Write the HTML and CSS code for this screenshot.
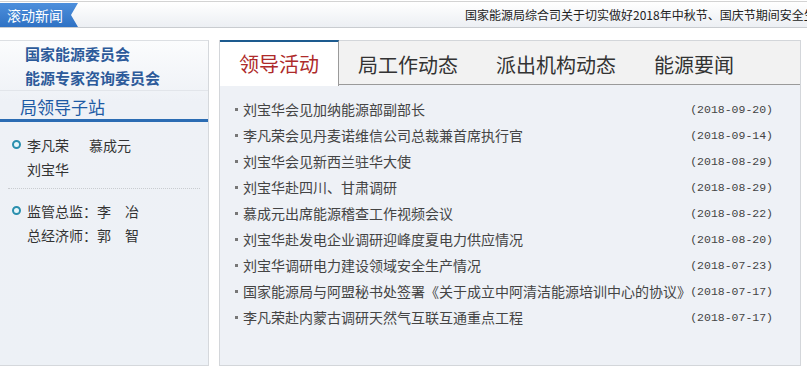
FILE: index.html
```html
<!DOCTYPE html>
<html lang="zh-CN">
<head>
  <meta charset="UTF-8" />
  <title>国家能源局 - 局领导子站</title>
  <link rel="stylesheet" href="styles.css">
</head>
<body>
  <!-- 滚动新闻 -->
  <div class="ticker">
    <div class="ticker-label">滚动新闻</div>
    <div class="ticker-text">国家能源局综合司关于切实做好2018年中秋节、国庆节期间安全生产工作的通知</div>
  </div>

  <div class="main">
    <!-- 左侧 -->
    <div class="side">
      <div class="side-links">
        <a href="#">国家能源委员会</a>
        <a href="#">能源专家咨询委员会</a>
      </div>
      <h2 class="side-title">局领导子站</h2>

      <div class="leader-group">
        <span class="dot"></span>
        <div class="names">
          <div><span class="name">李凡荣</span><span>慕成元</span></div>
          <div>刘宝华</div>
        </div>
      </div>
      <div class="leader-group">
        <span class="dot"></span>
        <div class="names">
          <div>监管总监：李　冶</div>
          <div>总经济师：郭　智</div>
        </div>
      </div>
    </div>

    <!-- 右侧 -->
    <div class="panel">
      <div class="tabs">
        <a class="tab active">领导活动</a>
        <a class="tab">局工作动态</a>
        <a class="tab">派出机构动态</a>
        <a class="tab">能源要闻</a>
      </div>
      <ul class="news">
        <li><span class="title">刘宝华会见加纳能源部副部长</span><span class="date">(2018-09-20)</span></li>
        <li><span class="title">李凡荣会见丹麦诺维信公司总裁兼首席执行官</span><span class="date">(2018-09-14)</span></li>
        <li><span class="title">刘宝华会见新西兰驻华大使</span><span class="date">(2018-08-29)</span></li>
        <li><span class="title">刘宝华赴四川、甘肃调研</span><span class="date">(2018-08-29)</span></li>
        <li><span class="title">慕成元出席能源稽查工作视频会议</span><span class="date">(2018-08-22)</span></li>
        <li><span class="title">刘宝华赴发电企业调研迎峰度夏电力供应情况</span><span class="date">(2018-08-20)</span></li>
        <li><span class="title">刘宝华调研电力建设领域安全生产情况</span><span class="date">(2018-07-23)</span></li>
        <li><span class="title">国家能源局与阿盟秘书处签署《关于成立中阿清洁能源培训中心的协议》</span><span class="date">(2018-07-17)</span></li>
        <li><span class="title">李凡荣赴内蒙古调研天然气互联互通重点工程</span><span class="date">(2018-07-17)</span></li>
      </ul>
    </div>
  </div>
</body>
</html>
```

FILE: styles.css
```css
html, body {
  margin: 0;
  padding: 0;
  background: #fff;
  font-family: "Noto Sans CJK SC", "Liberation Sans", sans-serif;
  color: #333;
}

body {
  width: 807px;
  padding-top: 1px;
  overflow: hidden;
}

a {
  text-decoration: none;
}

/* 滚动新闻 */
.ticker {
  display: flex;
  align-items: stretch;
  height: 25px;
  border-top: 1px solid #d3d3d3;
  border-bottom: 1px solid #c9ccd0;
  background: linear-gradient(#ffffff, #eceff3);
  overflow: hidden;
}

.ticker-label {
  flex-shrink: 0;
  width: 78px;
  margin-top: 1px;
  padding-left: 7px;
  box-sizing: border-box;
  color: #fff;
  font-size: 14px;
  line-height: 24px;
  white-space: nowrap;
  background: linear-gradient(#4d8fdc, #2f72c4);
  clip-path: polygon(0 0, 100% 0, 71px 50%, 100% 100%, 0 100%);
}

.ticker-text {
  flex-shrink: 0;
  margin-left: 387px;
  font-size: 12px;
  line-height: 26px;
  color: #222;
  white-space: nowrap;
}

/* 主体 */
.main {
  display: flex;
  gap: 10px;
  margin-top: 12px;
}

.side {
  width: 208px;
  height: 324px;
  border-top: 1px solid #dcdfe3;
  border-right: 1px solid #d5d8dc;
  border-bottom: 1px solid #d5d8dc;
  background: linear-gradient(#fbfcfd, #eef1f6 60px, #edf1f6);
}

.side-links {
  padding: 1px 0 0 25px;
  border-bottom: 1px solid #e2e5ea;
}

.side-links a {
  display: block;
  font-size: 15px;
  font-weight: bold;
  line-height: 24px;
  color: #2c5a9a;
}

.side-title {
  margin: 0;
  padding: 4px 0 0 20px;
  font-size: 17px;
  font-weight: normal;
  line-height: 24px;
  color: #1d5aa4;
  border-bottom: 3px solid #2b6cb3;
}

.leader-group {
  display: flex;
  padding: 11px 0 7px;
  margin: 0 8px;
  font-size: 14px;
  line-height: 24px;
  color: #333;
}

.leader-group + .leader-group {
  padding-top: 10px;
  border-top: 1px dotted #c9ccd0;
}

.dot {
  width: 5px;
  height: 5px;
  margin: 7px 6px 0 4px;
  border: 2px solid #2a8fae;
  border-radius: 50%;
  background: #e8f6fa;
  flex-shrink: 0;
}

.name {
  margin-right: 20px;
}

/* 右侧面板 */
.panel {
  width: 580px;
  height: 324px;
  border: 1px solid #d3d6da;
  background: #eef1f6;
}

.tabs {
  display: flex;
  height: 43px;
  background: #f2f2f2;
  border-bottom: 1px solid #9a9a9a;
}

.tab {
  padding: 2px 19px 0;
  border-top: 2px solid transparent;
  font-size: 20px;
  line-height: 39px;
  color: #333;
  cursor: pointer;
}

.tab.active {
  margin-top: -1px;
  border-top: 2px solid #1d5b8f;
  border-right: 1px solid #9a9a9a;
  height: 42px;
  background: #fff;
  color: #ae2a2a;
}

.news {
  list-style: none;
  margin: 0;
  padding: 11px 27px 0 15px;
}

.news li {
  display: flex;
  align-items: center;
  height: 26px;
  font-size: 14px;
  color: #444;
}

.news li::before {
  content: "";
  width: 3px;
  height: 3px;
  margin-right: 5px;
  background: #777;
  flex-shrink: 0;
}

.news .title {
  flex: 1;
  white-space: nowrap;
  overflow: hidden;
}

.news .date {
  flex-shrink: 0;
  font-family: "Liberation Mono", monospace;
  font-size: 11.5px;
  color: #444;
}
```
